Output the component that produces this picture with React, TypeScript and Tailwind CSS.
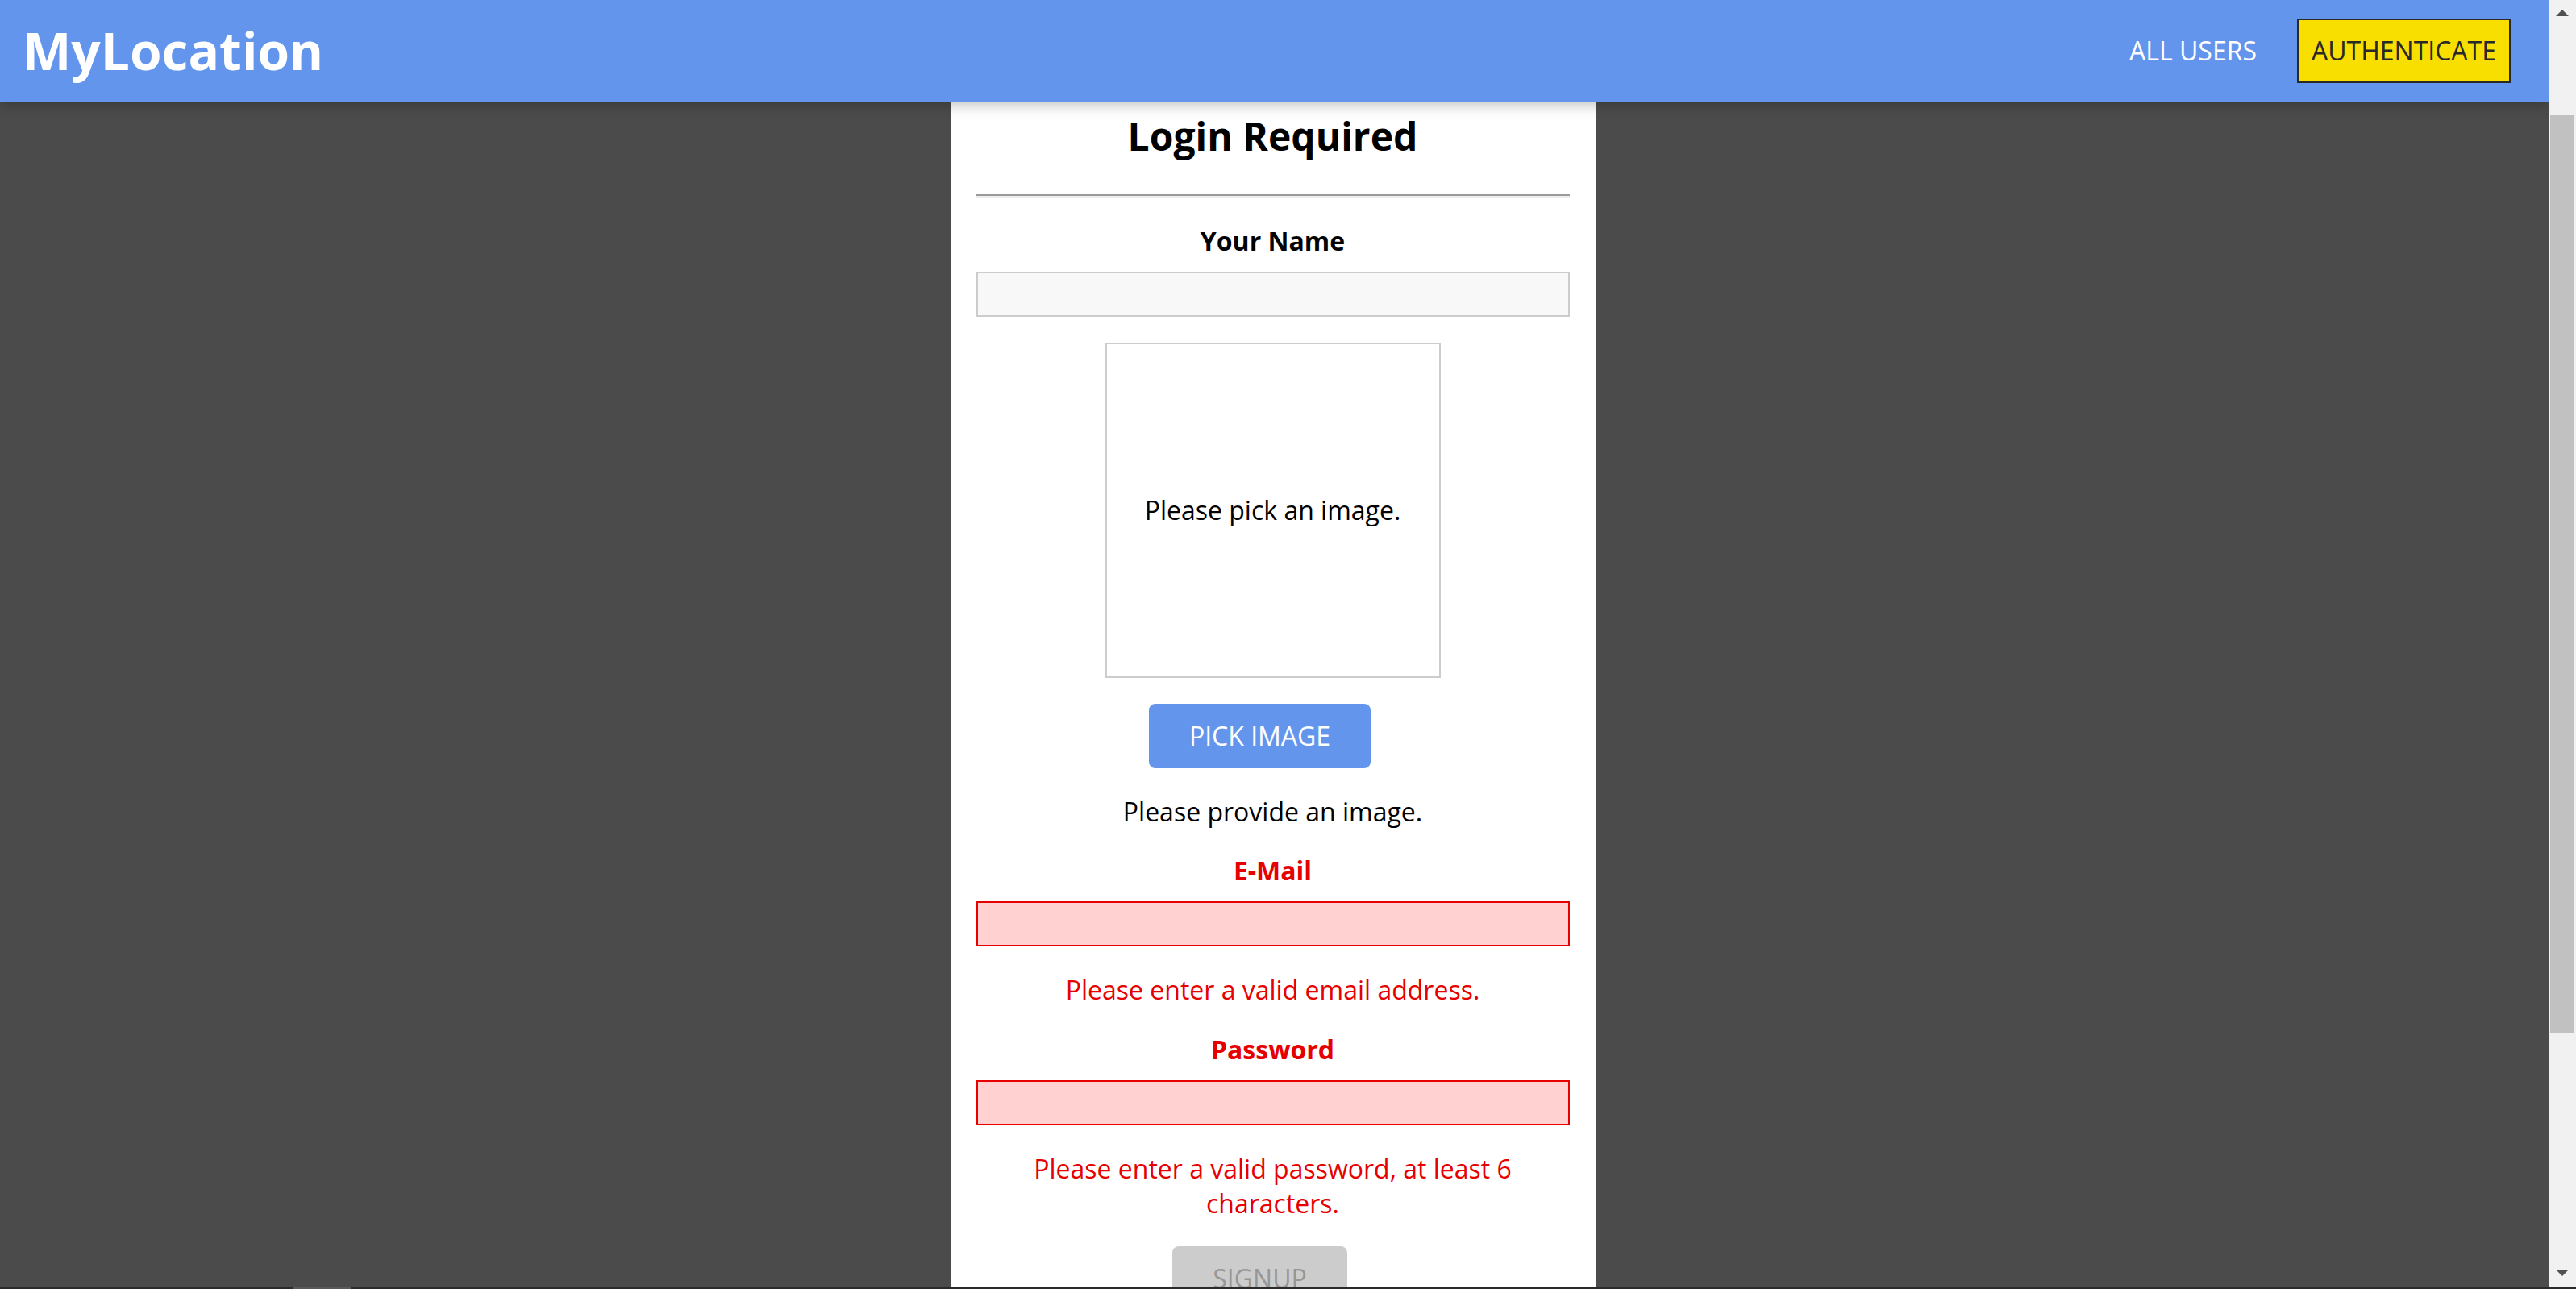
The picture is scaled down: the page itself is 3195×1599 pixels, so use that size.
import React from "react";

function NavLink({ label, active }: { label: string; active?: boolean }) {
    return (
        <li className="mx-[16px]">
            <a
                href="#"
                className={
                    active
                        ? "block border-2 border-[#292929] bg-[#f8df00] p-[16px] text-[32px] leading-[1.362] text-[#292929]"
                        : "block border-2 border-transparent p-[16px] text-[32px] leading-[1.362] text-white"
                }
            >
                {label}
            </a>
        </li>
    );
}

function ScrollbarFake() {
    return (
        <div className="flex w-[34px] shrink-0 flex-col items-center bg-[#f1f1f1]">
            <svg width="16" height="8" viewBox="0 0 16 8" className="mt-[12px] shrink-0">
                <polygon points="8,0 16,8 0,8" fill="#505050" />
            </svg>
            <div className="mt-[123px] h-[1139px] w-[30px] shrink-0 bg-[#c1c1c1]" />
            <div className="flex-1" />
            <svg width="16" height="8" viewBox="0 0 16 8" className="mb-[13px] shrink-0">
                <polygon points="0,0 16,0 8,8" fill="#505050" />
            </svg>
        </div>
    );
}

export default function App() {
    return (
        <div className="flex h-[1599px] w-full flex-col overflow-hidden font-['Open_Sans',sans-serif]">
            <div className="flex h-[1596px] min-h-0 w-full">
                <div className="flex min-w-0 flex-1 flex-col overflow-hidden bg-[#4b4b4b]">
                    <header className="relative z-10 flex h-[126px] shrink-0 items-center justify-between bg-[#6495ed] pl-[28px] pr-[31px] shadow-[0_4px_16px_rgba(0,0,0,0.26)]">
                        <h1 className="text-[64px] font-bold leading-[1.362] text-white">MyLocation</h1>
                        <nav>
                            <ul className="flex items-center">
                                <NavLink label="ALL USERS" />
                                <NavLink label="AUTHENTICATE" active />
                            </ul>
                        </nav>
                    </header>

                    <main className="flex flex-1 justify-center pr-[4px]">
                        <div className="flex w-[800px] shrink-0 flex-col items-center bg-white px-[32px] pt-[10px] text-center text-black">
                            <h2 className="text-[48px] font-bold leading-[1.362]">Login Required</h2>
                            <hr className="mt-[40px] h-0 w-full border-t-2 border-b-2 border-t-[#9a9a9a] border-b-[#eeeeee]" />

                            <form className="flex w-full flex-col items-center">
                                <label htmlFor="name" className="mt-[32px] block text-[32px] font-bold leading-[1.362]">
                                    Your Name
                                </label>
                                <input
                                    id="name"
                                    type="text"
                                    className="mt-[16px] h-[56px] w-full border-2 border-[#cccccc] bg-[#f8f8f8] px-[8px] text-[32px] focus:outline-none"
                                />

                                <div className="mt-[32px] flex h-[416px] w-[416px] items-center justify-center border-2 border-[#cccccc]">
                                    <p className="text-[32px] leading-[1.362]">Please pick an image.</p>
                                </div>
                                <button
                                    type="button"
                                    className="mr-[32px] mt-[32px] rounded-[8px] border-2 border-[#6495ed] bg-[#6495ed] px-[48px] py-[16px] text-[32px] leading-[1.362] text-white"
                                >
                                    PICK IMAGE
                                </button>
                                <p className="mt-[32px] text-[32px] leading-[1.362]">Please provide an image.</p>

                                <label htmlFor="email" className="mt-[30px] block text-[32px] font-bold leading-[1.362] text-[#e60000]">
                                    E-Mail
                                </label>
                                <input
                                    id="email"
                                    type="email"
                                    className="mt-[16px] h-[56px] w-full border-2 border-[#e60000] bg-[#ffd1d1] px-[8px] text-[32px] focus:outline-none"
                                />
                                <p className="mt-[32px] text-[32px] leading-[1.362] text-[#e60000]">
                                    Please enter a valid email address.
                                </p>

                                <label htmlFor="password" className="mt-[31px] block text-[32px] font-bold leading-[1.362] text-[#e60000]">
                                    Password
                                </label>
                                <input
                                    id="password"
                                    type="password"
                                    className="mt-[16px] h-[56px] w-full border-2 border-[#e60000] bg-[#ffd1d1] px-[8px] text-[32px] focus:outline-none"
                                />
                                <p className="mt-[32px] text-[32px] leading-[1.362] text-[#e60000]">
                                    Please enter a valid password, at least 6 characters.
                                </p>

                                <button
                                    type="submit"
                                    disabled
                                    className="mr-[32px] mt-[31px] rounded-[8px] border-2 border-[#cccccc] bg-[#cccccc] px-[48px] py-[16px] text-[32px] leading-[1.362] text-[#979797]"
                                >
                                    SIGNUP
                                </button>
                            </form>
                        </div>
                    </main>
                </div>
                <ScrollbarFake />
            </div>
            <div className="flex h-[3px] w-full shrink-0 bg-[#2b2b2b]">
                <div className="ml-[363px] w-[72px] bg-[#5a5a5a]" />
            </div>
        </div>
    );
}
